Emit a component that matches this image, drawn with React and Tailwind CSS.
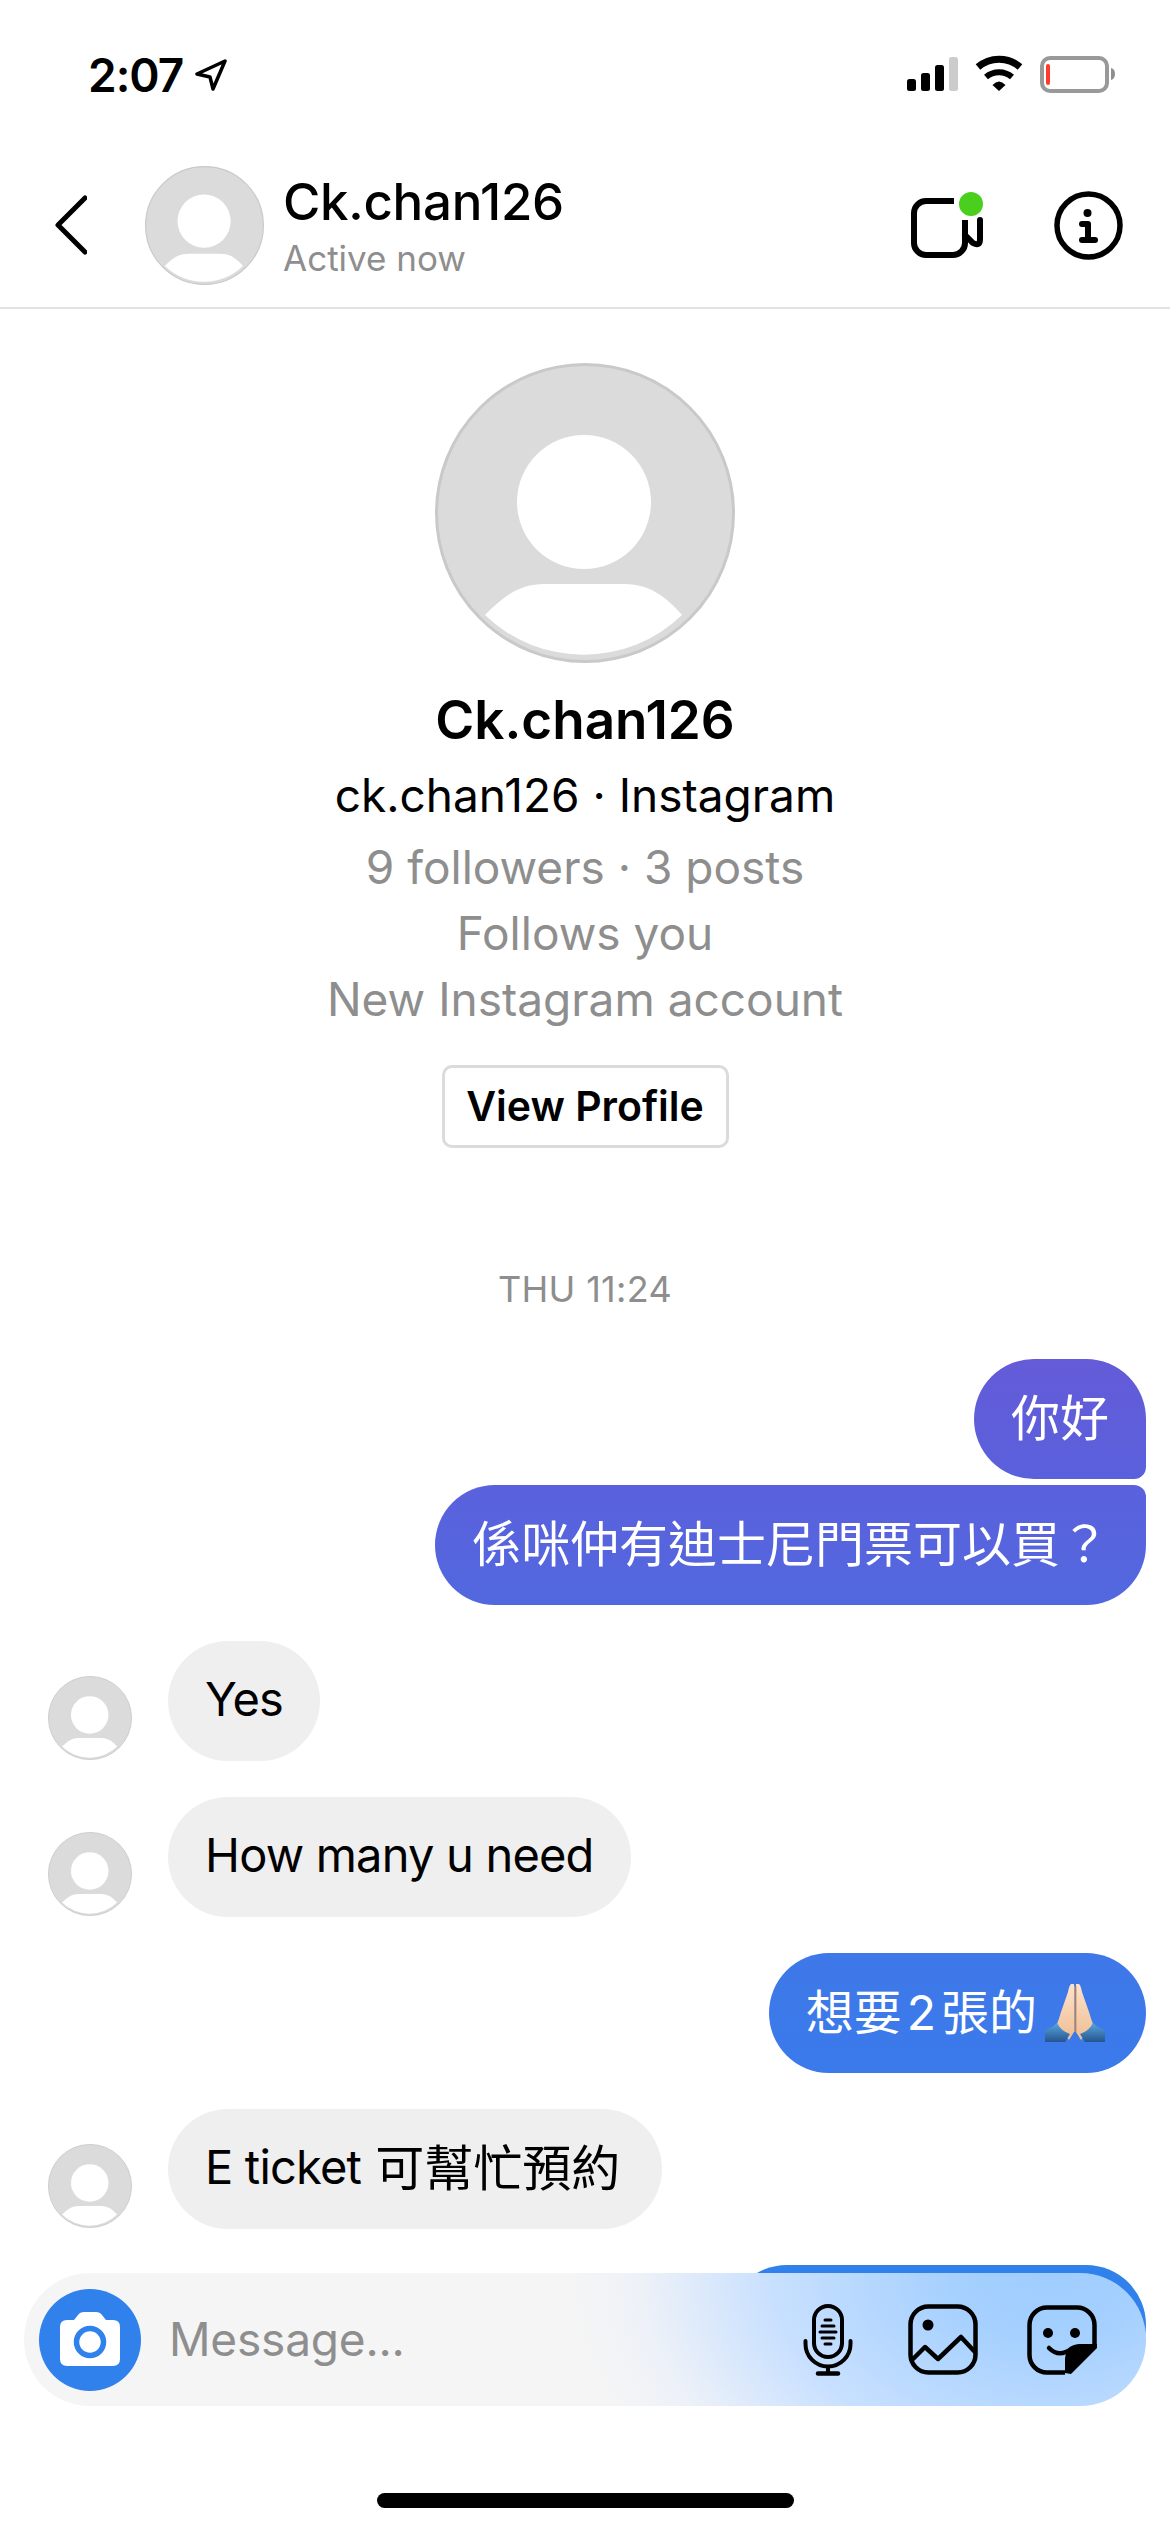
const Avatar = ({ className }) => (
  <svg viewBox="0 0 300 300" className={className}>
    <circle cx="150" cy="150" r="148.5" fill="#dbdbdb" stroke="#c9c9c9" strokeWidth="3" />
    <circle cx="149" cy="139" r="67" fill="#fff" />
    <path d="M50 252C70 232 85 221 110 221H190C215 221 232 235 247 252A142 142 0 0 1 50 252Z" fill="#fff" />
  </svg>
)

const StatusBar = () => (
  <div className="h-[149px] shrink-0 flex items-center pl-[88px] pr-[55px]">
    <span className="text-[46px] font-semibold tracking-[-1px] text-black leading-none">2:07</span>
    <svg viewBox="0 0 32 32" className="w-[32px] h-[32px] ml-[12px]">
      <path d="M30 2L2 15L15 18L18 30Z" fill="none" stroke="#000" strokeWidth="3.5" strokeLinejoin="round" />
    </svg>
    <svg viewBox="0 0 210 40" className="w-[210px] h-[40px] ml-auto">
      <rect x="2" y="24" width="9" height="12" rx="2.5" fill="#000" />
      <rect x="16" y="18" width="9" height="18" rx="2.5" fill="#000" />
      <rect x="30" y="10" width="9" height="26" rx="2.5" fill="#000" />
      <rect x="44" y="2" width="9" height="34" rx="2.5" fill="#ccc" />
      <path d="M73 12A32 32 0 0 1 115 12" fill="none" stroke="#000" strokeWidth="7" />
      <path d="M81 22A20 20 0 0 1 107 22" fill="none" stroke="#000" strokeWidth="6" />
      <path d="M87.5 30Q94 23 100.5 30L94 36Z" fill="#000" />
      <rect x="137" y="3" width="65" height="33" rx="8" fill="none" stroke="#999" strokeWidth="4" />
      <rect x="141" y="9" width="4" height="21" rx="2" fill="#ff3b30" />
      <path d="M206 13Q210 14 210 19Q210 24 206 25Z" fill="#8e8e8e" />
    </svg>
  </div>
)

const Header = () => (
  <div className="h-[160px] shrink-0 flex items-center pl-[55px] pr-[47px] pb-[6px] border-b-2 border-[#e3e3e3]">
    <svg viewBox="0 0 32 60" className="w-[32px] h-[60px]">
      <path d="M30 3L3 30L30 57" fill="none" stroke="#000" strokeWidth="5" strokeLinecap="round" strokeLinejoin="round" />
    </svg>
    <Avatar className="w-[119px] h-[119px] ml-[58px]" />
    <div className="ml-[19px] mt-[3px] flex flex-col">
      <span className="text-[51px] font-medium leading-[56px] tracking-[-0.3px] text-black">Ck.chan126</span>
      <span className="mt-[7px] text-[35px] leading-[42px] text-[#8e8e8e]">Active now</span>
    </div>
    <svg viewBox="0 0 72 66" className="w-[72px] h-[66px] ml-auto">
      <path d="M43 9H15A12 12 0 0 0 3 21V51A12 12 0 0 0 15 63H42A12 12 0 0 0 54 51V28" fill="none" stroke="#000" strokeWidth="6" />
      <path d="M54 43L62 51Q69 55 69 47V28" fill="none" stroke="#000" strokeWidth="6" strokeLinecap="round" />
      <circle cx="60" cy="12" r="12" fill="#4bcf1f" />
    </svg>
    <svg viewBox="0 0 69 69" className="w-[69px] h-[69px] ml-[71px]">
      <circle cx="34.5" cy="34.5" r="31.5" fill="none" stroke="#000" strokeWidth="5.5" />
      <circle cx="33.5" cy="22" r="4" fill="#000" />
      <path d="M28 33H34V49M28 49H41" fill="none" stroke="#000" strokeWidth="6" strokeLinecap="round" strokeLinejoin="round" />
    </svg>
  </div>
)

const Profile = () => (
  <div className="flex flex-col items-center pt-[54px]">
    <Avatar className="w-[300px] h-[300px]" />
    <div className="mt-[27px] text-[53px] font-semibold leading-[60px] text-black">Ck.chan126</div>
    <div className="mt-[15px] text-[46px] leading-[60px] text-black">ck.chan126 · Instagram</div>
    <div className="mt-[9px] flex flex-col items-center text-[46px] leading-[66px] text-[#8e8e8e]">
      <span>9 followers · 3 posts</span>
      <span>Follows you</span>
      <span>New Instagram account</span>
    </div>
    <div className="mt-[33px] w-[287px] h-[83px] flex items-center justify-center rounded-[10px] border-[3px] border-[#dbdbdb] text-[41px] font-semibold text-black">
      View Profile
    </div>
    <div className="mt-[121px] text-[36px] tracking-[0.3px] leading-[40px] text-[#8e8e8e]">THU 11:24</div>
  </div>
)

const Pray = () => (
  <svg viewBox="0 0 60 58" className="w-[60px] h-[58px] ml-[8px] mr-[4px]">
    <defs>
      <linearGradient id="skin" x1="0" y1="0" x2="0" y2="1">
        <stop offset="0" stopColor="#fde3cd" />
        <stop offset="1" stopColor="#eebd92" />
      </linearGradient>
      <linearGradient id="sleeve" x1="0" y1="0" x2="0" y2="1">
        <stop offset="0" stopColor="#5aa5de" />
        <stop offset="1" stopColor="#24558f" />
      </linearGradient>
    </defs>
    <path d="M29 0H26Q24 2 23 8L16 28Q14 35 12 40L24 56L29 48Z" fill="url(#skin)" />
    <path d="M31 0H34Q36 2 37 8L44 28Q46 35 48 40L36 56L31 48Z" fill="url(#skin)" />
    <path d="M29.5 2V48M31 2V48" stroke="#c9946a" strokeWidth="1" fill="none" />
    <path d="M0 46Q7 44 12 39Q16 47 25 50L20 58H0Z" fill="url(#sleeve)" />
    <path d="M60 46Q53 44 48 39Q44 47 35 50L40 58H60Z" fill="url(#sleeve)" />
  </svg>
)

const Bubble = ({ className, children }) => (
  <div className={`h-[120px] px-[37px] flex items-center text-[49px] whitespace-nowrap ${className}`}>
    {children}
  </div>
)

const Latin = ({ children }) => (
  <span className="pb-[3px] text-[47px] tracking-[-0.8px]">{children}</span>
)

const Incoming = ({ children }) => (
  <div className="flex items-end gap-[36px]">
    <Avatar className="w-[84px] h-[84px] mb-px" />
    <Bubble className="rounded-[60px] bg-[#efefef] text-black">{children}</Bubble>
  </div>
)

const Messages = () => (
  <div className="mt-[50px] pl-[48px] pr-[24px] flex flex-col gap-[36px]">
    <div className="flex flex-col items-end gap-[6px]">
      <Bubble className="rounded-[60px] rounded-br-[12px] bg-linear-to-b from-[#645bd8] to-[#5a60dc] text-white">你好</Bubble>
      <Bubble className="rounded-[60px] rounded-tr-[12px] bg-linear-to-b from-[#5a61dc] to-[#5268df] text-white">係咪仲有迪士尼門票可以買？</Bubble>
    </div>
    <Incoming><Latin>Yes</Latin></Incoming>
    <Incoming><Latin>How many u need</Latin></Incoming>
    <div className="flex justify-end">
      <Bubble className="rounded-[60px] bg-linear-to-b from-[#3f78e8] to-[#3a7aeb] text-white">
        <span className="text-[48px]">想要<span className="mx-[5px]">2</span>張的</span>
        <Pray />
      </Bubble>
    </div>
    <Incoming>
      <Latin>E ticket</Latin><span className="ml-[14px] mr-[5px]">可幫忙預約</span>
    </Incoming>
    <div className="flex justify-end">
      <div className="w-[419px] h-[120px] rounded-[60px] bg-[#3081ec]" />
    </div>
  </div>
)

const Composer = () => (
  <div className="absolute left-[24px] bottom-[126px] w-[1122px] h-[133px] pl-[15px] pr-[49px] flex items-center rounded-[66px] bg-[radial-gradient(480px_325px_at_1026px_0px,#9fcdff_0%,#a5d0ff_20%,#c8e0ff_58%,#edf1f8_85%,#f5f5f5_100%)]">
    <div className="w-[102px] h-[102px] rounded-full bg-[#3081ec] flex items-center justify-center">
      <svg viewBox="0 0 60 54" className="w-[60px] h-[54px] mb-[2px]">
        <path d="M7 8H14L18 3Q20 0 24 0H36Q40 0 42 3L46 8H53Q60 8 60 15V47Q60 54 53 54H7Q0 54 0 47V15Q0 8 7 8Z" fill="#fff" />
        <circle cx="30" cy="30" r="13.5" fill="none" stroke="#3081ec" strokeWidth="5.5" />
      </svg>
    </div>
    <span className="ml-[28px] text-[46px] tracking-[-0.2px] text-[#8e8e8e]">Message...</span>
    <svg viewBox="0 0 50 72" className="w-[50px] h-[72px] ml-auto">
      <rect x="11" y="2" width="28" height="51" rx="14" fill="none" stroke="#000" strokeWidth="4" />
      <path d="M22 16H28M19 22H31M17 28H33M19 34H31M22 40H28" stroke="#000" strokeWidth="3" strokeLinecap="round" />
      <path d="M2.5 37V40A22.5 22.5 0 0 0 47.5 40V37" fill="none" stroke="#000" strokeWidth="4" strokeLinecap="round" />
      <path d="M25 62V69" stroke="#000" strokeWidth="4" />
      <path d="M15 69.5H35" stroke="#000" strokeWidth="4.5" strokeLinecap="round" />
    </svg>
    <svg viewBox="0 0 70 71" className="w-[70px] h-[71px] ml-[55px]">
      <rect x="2.5" y="2.5" width="65" height="66" rx="18" fill="none" stroke="#000" strokeWidth="4.5" />
      <circle cx="20" cy="21" r="5.5" fill="#000" />
      <path d="M5 55L17 43L30 55L53 33L66 47" fill="none" stroke="#000" strokeWidth="4.5" strokeLinecap="round" strokeLinejoin="round" />
    </svg>
    <svg viewBox="0 0 70 70" className="w-[70px] h-[70px] ml-[49px]">
      <path d="M38 67.5H20A17.5 17.5 0 0 1 2.5 50V20A17.5 17.5 0 0 1 20 2.5H50A17.5 17.5 0 0 1 67.5 20V40" fill="none" stroke="#000" strokeWidth="4.5" />
      <path d="M38 68V54Q39 40 52 39H70V43L44 69Z" fill="#000" />
      <circle cx="21" cy="28" r="5" fill="#000" />
      <circle cx="48" cy="28" r="5" fill="#000" />
      <path d="M22 43Q32 53 44 44" fill="none" stroke="#000" strokeWidth="4.5" strokeLinecap="round" />
    </svg>
  </div>
)

export default function App() {
  return (
    <div className="relative w-[1170px] h-[2532px] overflow-hidden bg-white flex flex-col font-[Inter,'Noto_Sans_CJK_TC',sans-serif]">
      <StatusBar />
      <Header />
      <Profile />
      <Messages />
      <Composer />
      <div className="absolute left-[377px] bottom-[24px] w-[417px] h-[15px] rounded-full bg-black" />
    </div>
  )
}
